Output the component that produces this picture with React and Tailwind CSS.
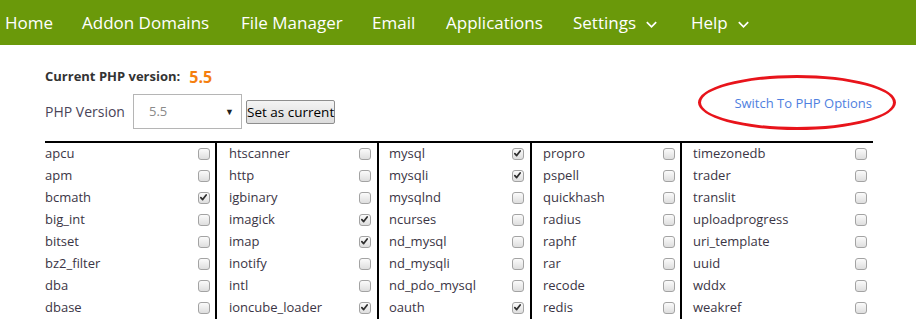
import React from "react";

const navItems = [
  { label: "Home", w: "w-[77px]" },
  { label: "Addon Domains", w: "w-[159px]" },
  { label: "File Manager", w: "w-[131px]" },
  { label: "Email", w: "w-[74px]" },
  { label: "Applications", w: "w-[127px]" },
  { label: "Settings", w: "w-[118px]", caret: true },
  { label: "Help", w: "w-[80px]", caret: true },
];

const columns = [
  {
    cls: "w-[170px] pl-0 pr-[5px]",
    items: [
      ["apcu", false], ["apm", false], ["bcmath", true], ["big_int", false],
      ["bitset", false], ["bz2_filter", false], ["dba", false], ["dbase", false],
    ],
  },
  {
    cls: "w-[162px] pl-[12px] pr-[6px] border-l-2 border-black",
    items: [
      ["htscanner", false], ["http", false], ["igbinary", false], ["imagick", true],
      ["imap", true], ["inotify", false], ["intl", false], ["ioncube_loader", true],
    ],
  },
  {
    cls: "w-[153px] pl-[10px] pr-[6px] border-l-2 border-black",
    items: [
      ["mysql", true], ["mysqli", true], ["mysqlnd", false], ["ncurses", false],
      ["nd_mysql", false], ["nd_mysqli", false], ["nd_pdo_mysql", false], ["oauth", true],
    ],
  },
  {
    cls: "w-[150px] pl-[11px] pr-[5px] border-l-2 border-black",
    items: [
      ["propro", false], ["pspell", false], ["quickhash", false], ["radius", false],
      ["raphf", false], ["rar", false], ["recode", false], ["redis", false],
    ],
  },
  {
    cls: "w-[193px] pl-[11px] pr-[6px] border-l-2 border-black",
    items: [
      ["timezonedb", false], ["trader", false], ["translit", false], ["uploadprogress", false],
      ["uri_template", false], ["uuid", false], ["wddx", false], ["weakref", false],
    ],
  },
];

function Check({ checked }) {
  return (
    <span className="relative inline-block w-[12px] h-[12px] -mt-[1px] rounded-[3px] border border-[#a3a3a3] bg-gradient-to-b from-[#fbfbfb] to-[#dedede]">
      {checked && (
        <svg viewBox="0 0 12 12" className="absolute left-[0px] top-[0px] w-[10px] h-[10px]">
          <path d="M2.2 5.6 L4.4 7.9 L8.6 2.4" fill="none" stroke="#2f2f2f" strokeWidth="2.1" strokeLinecap="round" strokeLinejoin="round" />
        </svg>
      )}
    </span>
  );
}

function Caret() {
  return (
    <svg viewBox="0 0 16 16" className="w-[15px] h-[15px] ml-[8px] mt-[3px]">
      <path d="M3 5.5 L8 10.5 L13 5.5" fill="none" stroke="white" strokeWidth="1.8" />
    </svg>
  );
}

export default function App() {
  return (
    <div className="relative w-[916px] h-[320px] overflow-hidden bg-white" style={{ fontFamily: '"Open Sans", "Noto Sans", sans-serif' }}>
      <nav className="h-[45px] bg-[#6a990a] flex items-center pl-[5px] text-white text-[17px]">
        {navItems.map((n) => (
          <div key={n.label} className={`${n.w} flex items-center whitespace-nowrap`}>
            <span>{n.label}</span>
            {n.caret && <Caret />}
          </div>
        ))}
      </nav>

      <div className="pl-[45px] pr-[43px]">
        <div className="mt-[20px] h-[24px] flex items-center">
          <span className="text-[13px] font-bold text-[#333]">Current PHP version:</span>
          <span className="ml-[9px] text-[16px] font-bold text-[#f57f0f]">5.5</span>
        </div>

        <div className="mt-[5px] h-[35px] flex">
          <div className="w-[88px] flex items-center text-[14px] text-[#4a4458]">PHP Version</div>
          <div className="w-[109px] h-[35px] border border-[#b5b5b5] flex items-center justify-between pl-[15px] pr-[7px] text-[13px] text-[#8a8a8a]">
            <span>5.5</span>
            <span className="text-[9px] text-[#222]">▼</span>
          </div>
          <div className="ml-[4px] self-center">
            <button className="h-[24px] w-[89px] border border-[#8e8e8e] rounded-[2px] bg-gradient-to-b from-[#f4f4f4] to-[#dcdcdc] text-[13.5px] text-black leading-none whitespace-nowrap px-0">
              Set as current
            </button>
          </div>
          <div className="ml-auto self-start pt-[0px] leading-[18px] text-[13px] text-[#4f7fe0] pr-[1px]">
            Switch To PHP Options
          </div>
        </div>

        <div className="mt-[12px] border-t-2 border-black flex">
          {columns.map((c, i) => (
            <div key={i} className={`${c.cls} shrink-0`}>
              {c.items.map(([label, checked]) => (
                <div key={label} className="h-[22px] flex items-center justify-between text-[13px] text-[#3b3545]">
                  <span>{label}</span>
                  <Check checked={checked} />
                </div>
              ))}
            </div>
          ))}
        </div>
      </div>

      <div className="absolute left-[698px] top-[75px] w-[198px] h-[55px] rounded-[50%] border-[3px] border-[#e8141b]"></div>
    </div>
  );
}
